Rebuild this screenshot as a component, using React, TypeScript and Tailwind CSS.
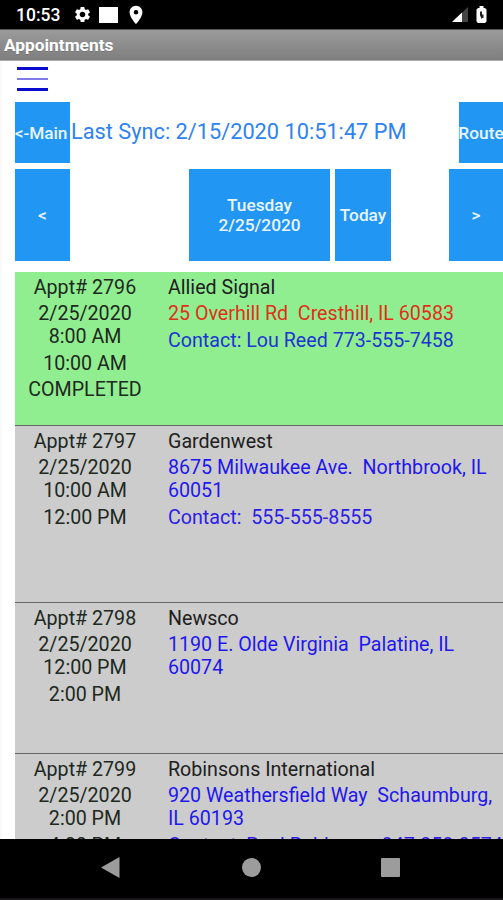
import { MdSettings, MdLocationOn } from "react-icons/md";

type Appointment = {
  id: string;
  times: string[];
  name: string;
  address: string[];
  contact?: string;
  height: string;
  color: string;
  addressColor: string;
  contactColor: string;
};

const appointments: Appointment[] = [
  { id: "2796", times: ["2/25/2020\n8:00 AM", "10:00 AM", "COMPLETED"], name: "Allied Signal", address: ["25 Overhill Rd  Cresthill, IL 60583"], contact: "Contact: Lou Reed 773-555-7458", height: "h-[154px]", color: "bg-[#90ee90]", addressColor: "text-[#e0301a]", contactColor: "text-[#1c34d4]" },
  { id: "2797", times: ["2/25/2020\n10:00 AM", "12:00 PM"], name: "Gardenwest", address: ["8675 Milwaukee Ave.  Northbrook, IL", "60051"], contact: "Contact:  555-555-8555", height: "h-[177px]", color: "bg-[#cccccc]", addressColor: "text-[#1f17ee]", contactColor: "text-[#2c20e6]" },
  { id: "2798", times: ["2/25/2020\n12:00 PM", "2:00 PM"], name: "Newsco", address: ["1190 E. Olde Virginia  Palatine, IL", "60074"], height: "h-[151px]", color: "bg-[#cccccc]", addressColor: "text-[#1f17ee]", contactColor: "text-[#2c20e6]" },
  { id: "2799", times: ["2/25/2020\n2:00 PM", "4:00 PM"], name: "Robinsons International", address: ["920 Weathersfield Way  Schaumburg,", "IL 60193"], contact: "Contact: Paul Robinson  847-358-3574", height: "h-[151px]", color: "bg-[#cccccc]", addressColor: "text-[#1f17ee]", contactColor: "text-[#2c20e6]" },
];

const button = "flex shrink-0 items-center justify-center bg-[#2196f3] text-center text-[17.3px] leading-5 font-medium text-[#e9f5ff]";

function StatusBar() {
  return (
    <div className="flex h-[29px] shrink-0 items-center bg-black text-white">
      <span className="ml-4 w-[57px] text-[17.500px] leading-5 font-medium">10:53</span>
      <MdSettings className="size-[19px]" />
      <span className="ml-[7px] h-4 w-[19px] bg-white" />
      <MdLocationOn className="ml-[7px] size-[22px]" />
      <svg className="ml-auto h-[15px] w-4" viewBox="0 0 16 15">
        <path d="M0 15 16 0V15Z" fill="#444" />
        <path d="M0 15 10 5.6V15Z" fill="white" />
      </svg>
      <svg className="mr-[16px] ml-[8px] h-[17px] w-[11px]" viewBox="0 0 11 17">
        <path d="M3.5 0h4v2H9l1.5 1.5v12L9 17H2L.5 15.500v-12L2 2h1.500Z" fill="white" />
        <path d="M4 5.500h2v3h1.500V12H6v1.500L4 9.500Z" fill="#222" />
      </svg>
    </div>
  );
}

function AppointmentRow({ item }: { item: Appointment }) {
  return (
    <div className={`flex shrink-0 border-b border-[#666] pt-[4px] ${item.height} ${item.color}`}>
      <div className="flex w-[140px] shrink-0 flex-col gap-[3.300px] text-center whitespace-pre text-[#202820]">
        <div>Appt# {item.id}</div>
        {item.times.map((time) => <div key={time}>{time}</div>)}
      </div>
      <div className="ml-[13px] flex shrink-0 flex-col gap-[3.300px] whitespace-pre text-[#202020]">
        <div>{item.name}</div>
        <div className={item.addressColor}>{item.address.join("\n")}</div>
        {item.contact && <div className={item.contactColor}>{item.contact}</div>}
      </div>
    </div>
  );
}

export default function App() {
  return (
    <div className="flex h-[900px] w-[503px] flex-col overflow-hidden bg-white font-['Roboto',sans-serif]">
      <StatusBar />
      <header className="flex h-[32px] shrink-0 items-center border-t border-b border-t-[#555] border-b-[#aaa] bg-linear-to-b from-[#9b9b9b] to-[#7e7e7e] pt-px pl-1 text-[17.3px] font-bold text-white text-shadow-2xs">
        Appointments
      </header>
      <main className="flex h-[778px] shrink-0 flex-col overflow-hidden border-l-2 border-[#fafafa] pl-[13px]">
        <div className="flex h-[41px] shrink-0 flex-col gap-[8px] pt-[6px] pl-[2px]">
          <div className="h-[2.500px] w-[31px] bg-[#0b0bcf]" />
          <div className="h-[2.500px] w-[31px] bg-[#817bed]" />
          <div className="h-[2.500px] w-[31px] bg-[#0b0bcf]" />
        </div>
        <div className="flex h-[61px] shrink-0">
          <button className={`${button} w-[55px] pr-[3px] tracking-[-0.1px] whitespace-nowrap`}>&lt;-Main</button>
          <div className="grow pt-[17px] pl-[1px] text-[21.750px] leading-[26px] whitespace-nowrap text-[#2e83f0]">Last Sync: 2/15/2020 10:51:47 PM</div>
          <button className={`${button} w-[44px]`}>Route</button>
        </div>
        <div className="mt-[6px] flex h-[92px] shrink-0">
          <button className={`${button} w-[55px]`}>&lt;</button>
          <button className={`${button} ml-[119px] w-[141px] whitespace-pre`}>{"Tuesday\n2/25/2020"}</button>
          <button className={`${button} ml-[5px] w-[56px]`}>Today</button>
          <button className={`${button} ml-auto w-[54px]`}>&gt;</button>
        </div>
        <div className="mt-[11px] flex flex-col text-[19.650px] leading-[23px]">
          {appointments.map((item) => <AppointmentRow key={item.id} item={item} />)}
        </div>
      </main>
      <nav className="flex h-[61px] shrink-0 items-center border-b-2 border-[#171316] bg-black pb-[2px]">
        <svg className="ml-[101px] h-[21px] w-[19px]" viewBox="0 0 19 21"><path d="M0 10.500 18.500 0V21Z" fill="#9c9c9c" /></svg>
        <div className="ml-[122px] size-[19px] rounded-full bg-[#9c9c9c]" />
        <div className="ml-[120px] size-[19px] rounded-[1px] bg-[#9c9c9c]" />
      </nav>
    </div>
  );
}
